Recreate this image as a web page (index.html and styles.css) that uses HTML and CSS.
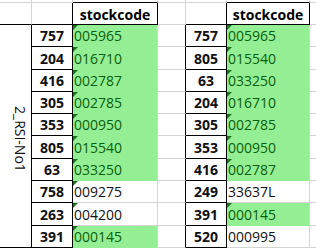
FILE: index.html
```html
<!DOCTYPE html>
<html>
<head>
<meta charset="utf-8">
<link rel="stylesheet" href="styles.css">
</head>
<body>
<table class="sheet">
  <colgroup>
    <col class="w-a"><col class="w-num"><col class="w-code"><col class="w-gap"><col class="w-num"><col class="w-code2"><col class="w-rest">
  </colgroup>
  <tr class="r-top">
    <td></td><td></td><td class="cap"></td><td></td><td></td><td class="cap"></td><td></td>
  </tr>
  <tr class="r-head">
    <td class="ha"></td><td class="hb"></td><td class="head">stockcode</td><td></td><td class="hb"></td><td class="head">stockcode</td><td></td>
  </tr>
  <tr class="r-data">
    <td class="label" rowspan="10"><span class="label-text">2_RSI-No1</span></td>
    <td class="num">757</td><td class="code ok">005965</td><td class="gap"></td><td class="num">757</td><td class="code ok">005965</td><td></td>
  </tr>
  <tr class="r-data">
    <td class="num">204</td><td class="code ok">016710</td><td class="gap"></td><td class="num">805</td><td class="code ok">015540</td><td></td>
  </tr>
  <tr class="r-data">
    <td class="num">416</td><td class="code ok">002787</td><td class="gap"></td><td class="num">63</td><td class="code ok">033250</td><td></td>
  </tr>
  <tr class="r-data">
    <td class="num">305</td><td class="code ok">002785</td><td class="gap"></td><td class="num">204</td><td class="code ok">016710</td><td></td>
  </tr>
  <tr class="r-data">
    <td class="num">353</td><td class="code ok">000950</td><td class="gap"></td><td class="num">305</td><td class="code ok">002785</td><td></td>
  </tr>
  <tr class="r-data">
    <td class="num">805</td><td class="code ok">015540</td><td class="gap"></td><td class="num">353</td><td class="code ok">000950</td><td></td>
  </tr>
  <tr class="r-data">
    <td class="num">63</td><td class="code ok">033250</td><td class="gap"></td><td class="num">416</td><td class="code ok">002787</td><td></td>
  </tr>
  <tr class="r-data">
    <td class="num">758</td><td class="code tri">009275</td><td class="gap"></td><td class="num">249</td><td class="code">33637L</td><td></td>
  </tr>
  <tr class="r-data">
    <td class="num">263</td><td class="code tri">004200</td><td class="gap"></td><td class="num">391</td><td class="code ok">000145</td><td></td>
  </tr>
  <tr class="r-data">
    <td class="num">391</td><td class="code ok">000145</td><td class="gap"></td><td class="num">520</td><td class="code">000995</td><td></td>
  </tr>
</table>
</body>
</html>
```
FILE: styles.css
```css
* { box-sizing: border-box; }
html, body { margin: 0; padding: 0; background: #fff; }
body {
  width: 316px;
  height: 249px;
  overflow: hidden;
  font-family: "Open Sans", Lato, "Liberation Sans", sans-serif;
  font-size: 14px;
  color: #000;
}
.sheet {
  border-collapse: separate;
  border-spacing: 0;
  table-layout: fixed;
  width: 330px;
}
.w-a { width: 32px; }
.w-num { width: 41px; }
.w-code { width: 85px; }
.w-gap { width: 28px; }
.w-code2 { width: 83px; }
.w-rest { width: 20px; }

.sheet td {
  border-right: 1px solid #d4d4d4;
  border-bottom: 1px solid #d4d4d4;
  padding: 0 0 2px 0;
  white-space: nowrap;
  overflow: hidden;
  vertical-align: bottom;
  line-height: 16px;
}
.r-top td { height: 3px; padding: 0; }
.r-head td { height: 22px; padding-bottom: 1px; }
.r-data td { height: 22.3px; }

.cap { border-bottom-color: #000 !important; }
.ha { border-bottom-color: #000 !important; }
.hb { border-right-color: #000 !important; border-bottom-color: #000 !important; }
.head {
  border-right-color: #000 !important;
  border-bottom-color: #000 !important;
  font-weight: 700;
  text-align: center;
}

.label {
  border-right-color: #000 !important;
  border-bottom-color: #000 !important;
  vertical-align: middle !important;
  text-align: left;
  padding: 8px 0 0 12px !important;
}
.label-text {
  display: inline-block;
  writing-mode: vertical-rl;
  line-height: 16px;
  color: #111;
}

.num {
  border-right-color: #000 !important;
  border-bottom-color: #000 !important;
  font-weight: 700;
  text-align: center;
  color: #111;
}
.gap { border-right-color: #000 !important; }

.code {
  position: relative;
  padding-left: 1px !important;
  color: #111;
}
.code.ok {
  background: #94ef94;
  border-bottom-color: #94ef94;
  color: #0b5e0b;
}
.ok::before, .tri::before {
  content: "";
  position: absolute;
  top: 0;
  left: 0;
  width: 0;
  height: 0;
  border-top: 5px solid #1a731a;
  border-right: 5px solid transparent;
}
```
